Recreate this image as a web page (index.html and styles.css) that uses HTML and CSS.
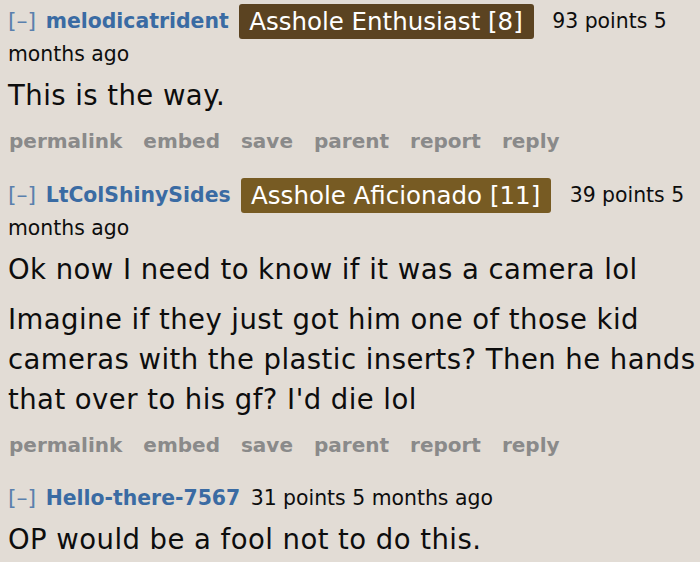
FILE: index.html
```html
<!DOCTYPE html>
<html>
<head>
<meta charset="utf-8">
<link rel="stylesheet" href="styles.css">
</head>
<body>
<div class="thread">
  <div class="comment">
    <p class="tagline"><span class="expand">[–]</span> <a class="author">melodicatrident</a> <span class="flair flair-dark">Asshole Enthusiast [8]</span> <span class="score">93 points</span> 5 months ago</p>
    <div class="md"><p>This is the way.</p></div>
    <ul class="buttons"><li>permalink</li><li>embed</li><li>save</li><li>parent</li><li>report</li><li>reply</li></ul>
  </div>
  <div class="comment">
    <p class="tagline"><span class="expand">[–]</span> <a class="author">LtColShinySides</a> <span class="flair flair-olive">Asshole Aficionado [11]</span> <span class="score">39 points</span> 5 months ago</p>
    <div class="md">
      <p>Ok now I need to know if it was a camera lol</p>
      <p>Imagine if they just got him one of those kid cameras with the plastic inserts? Then he hands that over to his gf? I'd die lol</p>
    </div>
    <ul class="buttons"><li>permalink</li><li>embed</li><li>save</li><li>parent</li><li>report</li><li>reply</li></ul>
  </div>
  <div class="comment">
    <p class="tagline"><span class="expand">[–]</span> <a class="author">Hello-there-7567</a> <span class="score">31 points</span> 5 months ago</p>
    <div class="md"><p>OP would be a fool not to do this.</p></div>
  </div>
</div>
</body>
</html>
```

FILE: styles.css
```css
html, body {
  margin: 0;
  padding: 0;
  background: #e2dcd5;
}
body {
  font-family: "DejaVu Sans", Verdana, sans-serif;
  color: #0d0d0d;
}
.thread {
  padding: 0 0 0 8px;
}
.comment {
  margin: 0;
}
.tagline {
  margin: 0;
  padding-top: 4px;
  font-size: 20.4px;
  line-height: 31px;
  color: #0d0d0d;
}
.expand {
  color: #5a80ad;
  font-size: 22px;
  margin-right: 3px;
}
.author {
  color: #3a6ba3;
  font-weight: bold;
  margin-right: 4px;
}
.flair {
  display: inline-block;
  vertical-align: middle;
  color: #fff;
  font-size: 24.5px;
  line-height: 35px;
  height: 35px;
  padding: 0 11px 0 10px;
  border-radius: 3px;
  margin-right: 12px;
}
.flair-dark {
  background: #5b4321;
}
.flair-olive {
  background: #775b23;
}
.md {
  font-size: 27.5px;
  letter-spacing: 0.45px;
  line-height: 40px;
  margin-top: 5px;
}
.md p {
  margin: 0 0 10px 0;
}
.buttons {
  list-style: none;
  margin: 3px 0 0 0;
  padding: 0 0 16px 1px;
  display: flex;
  gap: 21px;
  font-size: 20px;
  line-height: 33px;
  font-weight: bold;
  color: #8a8a8a;
}
```
